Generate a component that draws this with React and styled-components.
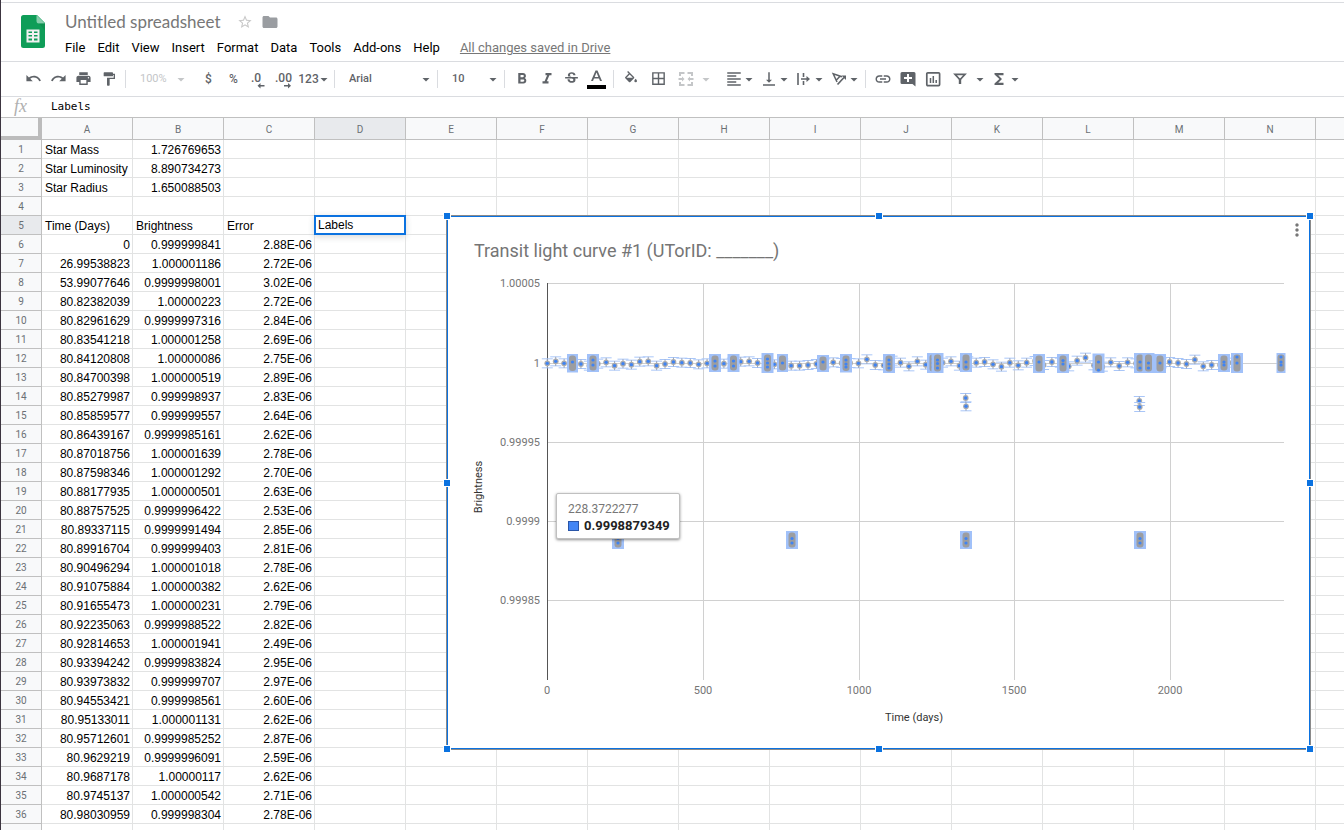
import React from "react";
import styled, { createGlobalStyle, css } from "styled-components";
import {
  MdUndo, MdRedo, MdPrint, MdFormatPaint, MdFormatBold, MdFormatItalic,
  MdStrikethroughS, MdBorderAll, MdFormatAlignLeft, MdVerticalAlignBottom,
  MdLink, MdFunctions, MdStarBorder, MdFolder, MdMoreVert,
} from "react-icons/md";

const GlobalStyle = createGlobalStyle`
  * { box-sizing: border-box; }
  html, body, #root { height: 100%; }
  body { margin: 0; background: #fff; font-family: Roboto, "Liberation Sans", sans-serif; }
`;

const Page = styled.div`
  height: 100vh;
  display: flex;
  flex-direction: column;
  overflow: hidden;
  border-left: 1px solid #3c3540;
`;

const Header = styled.header`
  display: flex;
  flex: none;
  height: 60px;
  margin-top: 2px;
  border-top: 1px solid #dadce0;
  border-bottom: 1px solid #dadce0;
`;
const Logo = styled.a`
  display: block;
  padding: 12px 12px 0 19px;
  svg { display: block; }
`;
const TitleArea = styled.div`
  display: flex;
  flex-direction: column;
`;
const TitleRow = styled.div`
  display: flex;
  align-items: center;
  height: 26px;
  margin-top: 6px;
  padding-left: 7px;
`;
const Title = styled.h1`
  margin: 0 16px 0 0;
  font-family: Lato, Roboto, sans-serif;
  font-size: 17px;
  line-height: 24px;
  font-weight: 400;
  color: #777;
`;
const PlainButton = styled.button`
  display: flex;
  padding: 0;
  margin: 0 8px 0 0;
  border: 0;
  background: none;
  color: ${(p) => p.$color};
`;
const Menu = styled.nav`
  display: flex;
  align-items: center;
  height: 26px;
`;
const MenuItem = styled.button`
  border: 0;
  background: none;
  padding: 0 6px;
  font: 400 13px/22px Roboto, sans-serif;
  color: #000;
  &:first-child { padding-left: 7px; }
`;
const SaveLink = styled.a`
  margin-left: 14px;
  font-size: 13px;
  line-height: 22px;
  color: #777;
`;

const Toolbar = styled.div`
  display: flex;
  flex: none;
  align-items: center;
  height: 35px;
  padding: 0 0 1px 20px;
  border-bottom: 1px solid #dadce0;
  color: #5f6368;
`;
const Tool = styled.button`
  display: flex;
  align-items: center;
  justify-content: ${(p) => (p.$start ? "flex-start" : "center")};
  gap: ${(p) => p.$gap || 0}px;
  width: ${(p) => p.$w || 25}px;
  height: 26px;
  padding: 0 0 0 ${(p) => (p.$start ? 4 : 0)}px;
  margin: 0;
  border: 0;
  background: none;
  font: 500 12px/16px Roboto, sans-serif;
  color: ${(p) => (p.$off ? "#c4c6c8" : "#5f6368")};
  flex: none;
  svg { flex: none; }
`;
const Separator = styled.span`
  width: 1px;
  height: 18px;
  margin: 0 4px;
  background: #dadce0;
  flex: none;
`;
const SelectBox = styled.span`
  display: grid;
  align-items: center;
  flex: none;
  width: ${(p) => p.$w}px;
  color: ${(p) => (p.$off ? "#c4c6c8" : "#5f6368")};
  > * { grid-area: 1 / 1; }
  > svg { justify-self: end; margin-right: ${(p) => (p.$off ? 11 : 3)}px; pointer-events: none; }
`;
const Select = styled.select`
  appearance: none;
  width: 100%;
  height: 26px;
  padding: 0 16px 0 10px;
  border: 0;
  background: none;
  font: ${(p) => (p.$off ? 400 : 500)} 11px/16px Roboto, sans-serif;
  color: inherit;
  opacity: 1;
`;

const FormulaBar = styled.div`
  display: flex;
  flex: none;
  align-items: center;
  height: 21px;
  border-bottom: 1px solid #c0c0c0;
`;
const Fx = styled.label`
  width: 48px;
  padding: 0 0 2px 13px;
  font: italic 18px/18px "Liberation Serif", serif;
  color: #b0b0b0;
`;
const FormulaInput = styled.input`
  flex: 1;
  min-width: 0;
  border: 0;
  outline: 0;
  padding: 0 2px;
  height: 18px;
  background: none;
  font: 11px/18px "DejaVu Sans Mono", monospace;
  color: #000;
`;

const Sheet = styled.main`
  position: relative;
  flex: 1;
  min-height: 0;
  overflow: hidden;
`;
const Grid = styled.table`
  table-layout: fixed;
  width: 100%;
  min-width: ${(p) => p.$min}px;
  border-collapse: separate;
  border-spacing: 0;
  tr > :last-child { border-right: 0; }
`;
const Corner = styled.th`
  height: 22px;
  padding: 0;
  background: #f8f9fa;
  border-right: 4px solid #bcbcbc;
  border-bottom: 4px solid #bcbcbc;
`;
const headCell = css`
  padding: 1px 0 0;
  font: 400 10px/17px Roboto, sans-serif;
  color: #6b7075;
  text-align: center;
  background: ${(p) => (p.$active ? "#e8eaed" : "#f8f9fa")};
  border-right: 1px solid #c0c0c0;
  border-bottom: 1px solid #c0c0c0;
`;
const ColHead = styled.th`
  ${headCell}
  height: 22px;
`;
const RowHead = styled.th`
  ${headCell}
  height: 19px;
`;
const Cell = styled.td`
  position: relative;
  height: 19px;
  padding: 2px 2px 0 3px;
  font: 12px/16px "Liberation Sans", Arial, sans-serif;
  color: #000;
  white-space: nowrap;
  text-align: ${(p) => (p.$num ? "right" : "left")};
  border-right: 1px solid #e2e3e3;
  border-bottom: 1px solid #e2e3e3;
`;
const ActiveCell = styled.div`
  position: absolute;
  inset: -1px;
  padding: 0 2px;
  border: 2px solid #0b72e0;
  background: #fff;
  box-shadow: 0 2px 6px rgba(60, 64, 67, 0.2);
`;

const ChartFrame = styled.section`
  position: absolute;
  left: 445px;
  top: 97px;
  width: 865px;
  height: 535px;
  background: #fff;
  border: 1px solid #8a8a8a;
  box-shadow: inset 0 0 0 1px #0b72e0;
`;
const Handle = styled.span`
  position: absolute;
  left: ${(p) => p.$x};
  top: ${(p) => p.$y};
  width: 8px;
  height: 8px;
  margin: -4px;
  background: #0b72e0;
  border: 1px solid #fff;
`;
const ChartMenu = styled.button`
  position: absolute;
  top: 4px;
  right: 3px;
  display: flex;
  padding: 0;
  border: 0;
  background: none;
  color: #777;
`;
const ChartSvg = styled.svg`
  display: block;
  font-family: Roboto, sans-serif;
`;
const Tooltip = styled.div`
  position: absolute;
  left: 109px;
  top: 277px;
  width: 124px;
  height: 46px;
  padding: 7px 0 0 11px;
  background: #fff;
  border: 1px solid #c0c0c0;
  border-radius: 2px;
  box-shadow: 0 1px 3px rgba(0, 0, 0, 0.45);
  font-size: 12px;
  line-height: 16px;
  color: #777;
`;
const TipValue = styled.div`
  display: flex;
  align-items: center;
  gap: 5px;
  font-size: 13px;
  line-height: 18px;
  font-weight: 700;
  color: #222;
`;
const Swatch = styled.span`
  flex: none;
  width: 11px;
  height: 10px;
  background: #4285f4;
  border: 1px solid #2a56a8;
`;

const Arrow = () => (
  <svg width="8" height="18" viewBox="0 0 8 18" aria-hidden="true">
    <path d="M.5 8h7L4 11.5z" fill="currentColor" />
  </svg>
);
const SheetsLogo = () => (
  <svg width="26" height="34" viewBox="0 0 26 34" aria-hidden="true">
    <path d="M3.500 0H17l8 8v22.500a2.500 2.500 0 0 1-2.500 2.500h-19a2.500 2.500 0 0 1-2.500-2.500V2.500A2.500 2.500 0 0 1 3.500 0z" fill="#0f9d58" />
    <path d="M16.500 0l8.500 8.500h-6a2.500 2.500 0 0 1-2.500-2.500z" fill="#87ceac" />
    <path d="M19 8.500h6v7z" fill="#0b8043" opacity=".4" />
    <path d="M6.500 14.500h13v13h-13zM8.500 16.500v1.500h3.500v-1.500zM14 16.500v1.500h3.500v-1.500zM8.500 20v1.500h3.500v-1.500zM14 20v1.500h3.500v-1.500zM8.500 23.500v2h3.500v-2zM14 23.500v2h3.500v-2z" fill="#f1f1f1" fillRule="evenodd" />
  </svg>
);
const FillIcon = () => (
  <svg width="16" height="16" viewBox="0 0 24 24" aria-hidden="true">
    <path d="M16.560 8.940L7.620 0 6.210 1.410l2.380 2.380-5.150 5.150c-.59.59-.59 1.540 0 2.120l5.500 5.500c.29.29.68.44 1.060.44s.77-.15 1.060-.44l5.500-5.500c.59-.58.59-1.530 0-2.120zM5.210 10L10 5.210 14.790 10zM19 11.500s-2 2.170-2 3.500a2 2 0 0 0 4 0c0-1.330-2-3.500-2-3.500z" fill="currentColor" />
  </svg>
);
const MergeIcon = () => (
  <svg width="18" height="18" viewBox="0 0 18 18" fill="none" stroke="currentColor" strokeWidth="2" aria-hidden="true">
    <path d="M7.500 3H3v3M10.500 3H15v3M7.500 15H3v-3M10.500 15H15v-3M1.500 9H6M16.500 9H12" />
    <path d="M5 6.500L7.500 9 5 11.500zM13 6.500L10.500 9 13 11.500z" fill="currentColor" stroke="none" />
  </svg>
);
const OverflowIcon = () => (
  <svg width="18" height="18" viewBox="0 0 18 18" fill="none" stroke="currentColor" strokeWidth="1.600" aria-hidden="true">
    <path d="M3 3v12M8.500 3v4M8.500 11v4M6 9h6.500" />
    <path d="M11.500 6l3.500 3-3.500 3z" fill="currentColor" stroke="none" />
  </svg>
);
const RotateIcon = () => (
  <svg width="18" height="18" viewBox="0 0 18 18" fill="none" stroke="currentColor" strokeWidth="1.500" aria-hidden="true">
    <path d="M7 12L3.200 3.800 12 6.800M6.200 10.200L10 6.200" />
    <path d="M7.500 14.500L14 7.500" strokeWidth="1.700" />
    <path d="M11.500 5.500h4.500v4.500z" fill="currentColor" stroke="none" />
  </svg>
);
const CommentIcon = () => (
  <svg width="18" height="18" viewBox="0 0 18 18" aria-hidden="true">
    <path d="M3 2h12a1.500 1.500 0 0 1 1.500 1.500V16.500L13.500 14H3a1.500 1.500 0 0 1-1.500-1.500v-9A1.500 1.500 0 0 1 3 2zM8 4v3H5v2h3v3h2V9h3V7h-3V4z" fill="currentColor" fillRule="evenodd" />
  </svg>
);
const ChartIcon = () => (
  <svg width="18" height="18" viewBox="0 0 18 18" fill="none" stroke="currentColor" strokeWidth="1.700" aria-hidden="true">
    <rect x="2.800" y="2.800" width="12.800" height="12.800" rx="1" />
    <path d="M6.500 13V8M9.300 13V6M12.200 13v-3" strokeWidth="1.500" />
  </svg>
);
const FunnelIcon = () => (
  <svg width="18" height="18" viewBox="0 0 18 18" fill="none" stroke="currentColor" aria-hidden="true">
    <path d="M4 4.300h10L9.700 9h-1.400z" strokeWidth="1.700" />
    <path d="M9 9v5" strokeWidth="2.400" />
  </svg>
);
const DecimalIcon = ({ text, add }) => (
  <svg width="20" height="22" viewBox="0 0 20 22" aria-hidden="true">
    <text x={add ? 1 : 2} y="14" fontSize="12" fontWeight="500" fontFamily="Roboto" fill="currentColor">{text}</text>
    {add
      ? <path d="M10 17h4v-2l3 2.800-3 2.700v-2h-4z" fill="currentColor" />
      : <path d="M15.500 17h-4v-2l-3 2.800 3 2.700v-2h4z" fill="currentColor" />}
  </svg>
);
const TextColorIcon = () => (
  <svg width="19" height="22" viewBox="0 0 19 22" aria-hidden="true">
    <path d="M8.500 2.500h2L15 13h-2l-1-2.500H7L6 13H4zM9.500 4.600L7.700 9h3.600z" fill="currentColor" fillRule="evenodd" />
    <path d="M0 17h19v4H0z" fill="#000" />
  </svg>
);

const ROWS = `Star Mass|1.726769653|
Star Luminosity|8.890734273|
Star Radius|1.650088503|
||
Time (Days)|Brightness|Error
0|0.999999841|2.88E-06
26.99538823|1.000001186|2.72E-06
53.99077646|0.9999998001|3.02E-06
80.82382039|1.00000223|2.72E-06
80.82961629|0.9999997316|2.84E-06
80.83541218|1.000001258|2.69E-06
80.84120808|1.00000086|2.75E-06
80.84700398|1.000000519|2.89E-06
80.85279987|0.999998937|2.83E-06
80.85859577|0.999999557|2.64E-06
80.86439167|0.9999985161|2.62E-06
80.87018756|1.000001639|2.78E-06
80.87598346|1.000001292|2.70E-06
80.88177935|1.000000501|2.63E-06
80.88757525|0.9999996422|2.53E-06
80.89337115|0.9999991494|2.85E-06
80.89916704|0.999999403|2.81E-06
80.90496294|1.000001018|2.78E-06
80.91075884|1.000000382|2.62E-06
80.91655473|1.000000231|2.79E-06
80.92235063|0.9999988522|2.82E-06
80.92814653|1.000001941|2.49E-06
80.93394242|0.9999983824|2.95E-06
80.93973832|0.999999707|2.97E-06
80.94553421|0.999998561|2.60E-06
80.95133011|1.000001131|2.62E-06
80.95712601|0.9999985252|2.87E-06
80.9629219|0.9999996091|2.59E-06
80.9687178|1.00000117|2.62E-06
80.9745137|1.000000542|2.71E-06
80.98030959|0.999998304|2.78E-06`.split("\n").map((r) => r.split("|"));
const COLS = "ABCDEFGHIJKLMN".split("");
const isNumber = (v) => /^[\d.]+(E-\d+)?$/.test(v);

/* Plot coordinates, in pixels of the chart's own drawing area. */
const X0 = 101, X1 = 838, Y0 = 68, Y1 = 465;
const X_TICKS = [[0, 101], [500, 257], [1000, 413], [1500, 568], [2000, 724]];
const Y_TICKS = [["1.00005", 68], ["1", 148], ["0.99995", 227], ["0.9999", 306], ["0.99985", 385]];

/* Heights of the evenly sampled points, in thirds of a pixel. */
const SINGLES = [
  70, 64, 70, 68, 72, 77, 71, 67, 77, 71, 74, 65, 64, 77, 72, 66, 68, 69, 73, 70, 68, 71, 68,
  65, 64, 69, 70, 73, 70, 77, 77, 75, 72, 70, 67, 69, 69, 70, 58, 75, 76, 62, 68, 79, 64, 74,
  70, 68, 64, 77, 64, 68, 66, 73, 80, 68, 76, 68, 63, 75, 66, 68, 79, 62, 53, 76, 80, 67, 78,
  67, 70, 70, 66, 70, 66, 69, 72, 59, 79, 75, 75, 68,
].map((v, i) => [101.3 + i * 8.41, 124 + v / 3]);
const DIPS = [[519.7, 182], [520, 190.3], [693.3, 185], [693.7, 191]];

/* Dense transit samples: centre, width, top, bottom, dot heights. */
const CLUSTERS = [
  [126.5, 11, 138, 156.5, [146]], [147, 12, 138, 156, [144, 149]],
  [269, 12, 138, 156, [145, 150]], [287.5, 12, 138, 156, [145, 150]],
  [321.5, 12, 137, 157, [143, 147, 151]], [336.5, 11, 138, 156, [147]],
  [377, 12, 139, 156, [146]], [400, 12, 138, 156.5, [144, 148, 151]],
  [443, 12, 138, 157, [144, 148, 152]], [487, 12, 137, 157, [143, 147, 151]],
  [491.5, 12, 137, 157, [144, 147.5, 152]], [520, 12, 137, 156, [146, 151]],
  [593, 12, 138, 157, [146]], [617, 12, 138, 157, [144.5, 148]],
  [652.5, 12, 137.5, 157, [146, 154]], [694, 12, 137, 157, [146, 152]],
  [702.5, 12, 137, 157, [147, 152]], [714, 12, 138, 157, [147]],
  [778, 12, 138, 156, [146, 149]], [791, 12, 137, 157, [141, 147]],
  [835, 9, 137, 157, [141, 146, 149]],
  [172, 12, 315, 333, [322.5, 327]], [346, 12, 315, 333, [322.5, 327]],
  [520, 12, 315, 333, [322.5, 327]], [694, 12, 315, 333, [322.5, 327]],
];

const Point = ({ x, y, e = 4.5 }) => (
  <g>
    <path d={`M${x - 5.5} ${y - e}h11M${x - 5.5} ${y + e}h11`} stroke="#a9c6f8" strokeWidth="1" />
    <path d={`M${x} ${y - e}v${e * 2}`} stroke="#9aa3b5" strokeWidth="1" />
    <circle cx={x} cy={y} r="2.900" fill="#aaabad" />
    <circle cx={x} cy={y} r="1.700" fill="#3f83f2" />
  </g>
);
const Cluster = ({ c: [x, w, top, bottom, dots] }) => (
  <g>
    <rect x={x - w / 2} y={top} width={w} height={bottom - top} fill="#a1c1f9" />
    <rect x={x - 3.5} y={top + 1.5} width="7" height={bottom - top - 3} rx="3" fill="#9c9da0" />
    {dots.map((d) => (
      <circle key={d} cx={x} cy={d} r="1.600" fill="#3f83f2" />
    ))}
  </g>
);

const Plot = () => (
  <ChartSvg width="863" height="533" viewBox="1 0 863 533" role="img" aria-label="Transit light curve">
    <text x="28" y="41" fontSize="18" fill="#757575">Transit light curve #1 (UTorID: _______)</text>
    <g shapeRendering="crispEdges">
      {Y_TICKS.map(([t, y]) => <rect key={t} x={X0} y={y - 1} width={X1 - X0} height="1" fill="#d0d0d0" />)}
      {X_TICKS.map(([t, x]) => <rect key={t} x={x} y={Y0 - 1} width="1" height={Y1 - Y0} fill={t ? "#d0d0d0" : "#555"} />)}
    </g>
    <g fontSize="11" fill="#757575">
      {Y_TICKS.map(([t, y]) => <text key={t} x="94" y={y + 3} textAnchor="end">{t}</text>)}
      {X_TICKS.map(([t, x]) => <text key={t} x={x} y="478" textAnchor="middle">{t}</text>)}
    </g>
    <g fontSize="11" fill="#333" textAnchor="middle">
      <text x="468" y="505">Time (days)</text>
      <text transform="translate(36 271) rotate(-90)">Brightness</text>
    </g>
    {SINGLES.map(([x, y]) => <Point key={x} x={x} y={y} />)}
    {CLUSTERS.map((c) => <Cluster key={c[0] + "-" + c[2]} c={c} />)}
    {DIPS.map(([x, y]) => <Point key={y} x={x} y={y} />)}
  </ChartSvg>
);

const HANDLES = ["0%", "50%", "100%"].flatMap((y) =>
  ["0%", "50%", "100%"].filter((x) => x !== "50%" || y !== "50%").map((x) => [x, y])
);

export default function App() {
  return (
    <Page>
      <GlobalStyle />
      <Header>
        <Logo href="#" aria-label="Sheets home"><SheetsLogo /></Logo>
        <TitleArea>
          <TitleRow>
            <Title>Untitled spreadsheet</Title>
            <PlainButton $color="#c8c8c8" aria-label="Star"><MdStarBorder size={16} /></PlainButton>
            <PlainButton $color="#9a9da1" aria-label="Move to folder"><MdFolder size={18} /></PlainButton>
          </TitleRow>
          <Menu>
            {["File", "Edit", "View", "Insert", "Format", "Data", "Tools", "Add-ons", "Help"].map((m) => (
              <MenuItem key={m}>{m}</MenuItem>
            ))}
            <SaveLink href="#">All changes saved in Drive</SaveLink>
          </Menu>
        </TitleArea>
      </Header>

      <Toolbar role="toolbar">
        <Tool aria-label="Undo"><MdUndo size={17} /></Tool>
        <Tool aria-label="Redo"><MdRedo size={17} /></Tool>
        <Tool aria-label="Print"><MdPrint size={17} /></Tool>
        <Tool aria-label="Paint format"><MdFormatPaint size={16} /></Tool>
        <Separator />
        <SelectBox $w={66} $off>
          <Select $off aria-label="Zoom" disabled><option>100%</option></Select>
          <Arrow />
        </SelectBox>
        <Tool>$</Tool>
        <Tool>%</Tool>
        <Tool aria-label="Decrease decimal places"><DecimalIcon text=".0" /></Tool>
        <Tool aria-label="Increase decimal places"><DecimalIcon text=".00" add /></Tool>
        <Tool $w={34} $gap={1}>123<Arrow /></Tool>
        <Separator />
        <SelectBox $w={94}>
          <Select aria-label="Font"><option>Arial</option></Select>
          <Arrow />
        </SelectBox>
        <Separator />
        <SelectBox $w={58}>
          <Select aria-label="Font size"><option>10</option></Select>
          <Arrow />
        </SelectBox>
        <Separator />
        <Tool aria-label="Bold"><MdFormatBold size={18} /></Tool>
        <Tool aria-label="Italic"><MdFormatItalic size={18} /></Tool>
        <Tool aria-label="Strikethrough"><MdStrikethroughS size={17} /></Tool>
        <Tool aria-label="Text color"><TextColorIcon /></Tool>
        <Separator />
        <Tool aria-label="Fill color"><FillIcon /></Tool>
        <Tool $w={30} aria-label="Borders"><MdBorderAll size={17} /></Tool>
        <Tool $w={48} $off $start $gap={7} aria-label="Merge cells"><MergeIcon /><Arrow /></Tool>
        <Tool $w={35} $gap={2} aria-label="Horizontal align"><MdFormatAlignLeft size={18} /><Arrow /></Tool>
        <Tool $w={35} $gap={2} aria-label="Vertical align"><MdVerticalAlignBottom size={18} /><Arrow /></Tool>
        <Tool $w={35} $gap={2} aria-label="Text wrapping"><OverflowIcon /><Arrow /></Tool>
        <Tool $w={35} $gap={2} aria-label="Text rotation"><RotateIcon /><Arrow /></Tool>
        <Separator />
        <Tool aria-label="Insert link"><MdLink size={18} /></Tool>
        <Tool aria-label="Insert comment"><CommentIcon /></Tool>
        <Tool aria-label="Insert chart"><ChartIcon /></Tool>
        <Tool $w={44} $gap={7} aria-label="Filter"><FunnelIcon /><Arrow /></Tool>
        <Tool $w={30} $gap={3} aria-label="Functions"><MdFunctions size={18} /><Arrow /></Tool>
      </Toolbar>

      <FormulaBar>
        <Fx htmlFor="formula">fx</Fx>
        <FormulaInput id="formula" defaultValue="Labels" />
      </FormulaBar>

      <Sheet>
        <Grid $min={41 + 91 * COLS.length}>
          <colgroup>
            <col width="41" />
            {COLS.map((c) => <col key={c} width="91" />)}
            <col />
          </colgroup>
          <thead>
            <tr>
              <Corner />
              {COLS.map((c) => <ColHead key={c} $active={c === "D"}>{c}</ColHead>)}
              <ColHead />
            </tr>
          </thead>
          <tbody>
            {ROWS.map((row, r) => (
              <tr key={r}>
                <RowHead $active={r === 4}>{r + 1}</RowHead>
                {COLS.map((c, i) => (
                  <Cell key={c} $num={isNumber(row[i] || "")}>
                    {r === 4 && c === "D" ? <ActiveCell>Labels</ActiveCell> : row[i]}
                  </Cell>
                ))}
                <Cell />
              </tr>
            ))}
            <tr>
              <RowHead />
              {COLS.map((c) => <Cell key={c} />)}
              <Cell />
            </tr>
          </tbody>
        </Grid>
        <ChartFrame>
          <Plot />
          <ChartMenu aria-label="Chart options"><MdMoreVert size={20} /></ChartMenu>
          <Tooltip>
            228.3722277
            <TipValue><Swatch />0.9998879349</TipValue>
          </Tooltip>
          {HANDLES.map(([x, y]) => <Handle key={x + y} $x={x} $y={y} />)}
        </ChartFrame>
      </Sheet>
    </Page>
  );
}
